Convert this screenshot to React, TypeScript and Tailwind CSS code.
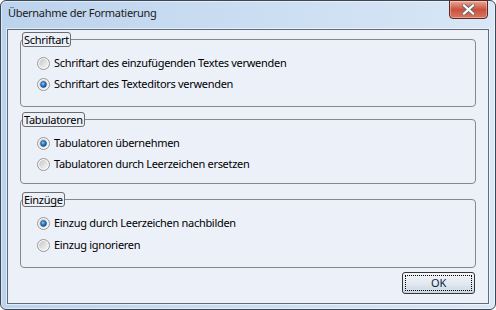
import React from "react";

const groups = [
  {
    title: "Schriftart",
    box: "mt-[2px] h-[75px]",
    gap: "gap-[5px]",
    options: [
      { label: "Schriftart des einzufügenden Textes verwenden", checked: false },
      { label: "Schriftart des Texteditors verwenden", checked: true },
    ],
  },
  {
    title: "Tabulatoren",
    box: "mt-[5px] h-[72px]",
    gap: "gap-[5px]",
    options: [
      { label: "Tabulatoren übernehmen", checked: true },
      { label: "Tabulatoren durch Leerzeichen ersetzen", checked: false },
    ],
  },
  {
    title: "Einzüge",
    box: "mt-[8px] h-[76px]",
    gap: "gap-[6px]",
    options: [
      { label: "Einzug durch Leerzeichen nachbilden", checked: true },
      { label: "Einzug ignorieren", checked: false },
    ],
  },
];

function Radio({ checked }: { checked: boolean }) {
  return (
    <svg width="13" height="13" viewBox="0 0 13 13" className="shrink-0">
      <defs>
        <linearGradient id="rbInner" x1="0" y1="0" x2="1" y2="1">
          <stop offset="0" stopColor="#c6c6c6" />
          <stop offset="1" stopColor="#f7f7f7" />
        </linearGradient>
        <radialGradient id="rbDot" cx="0.4" cy="0.35" r="0.7">
          <stop offset="0" stopColor="#8fd0ff" />
          <stop offset="0.5" stopColor="#2b7fd0" />
          <stop offset="1" stopColor="#0d4d92" />
        </radialGradient>
      </defs>
      <circle cx="6.5" cy="6.5" r="6" fill="#f5f5f5" stroke="#979797" />
      <circle cx="6.5" cy="6.5" r="4.4" fill="url(#rbInner)" />
      {checked && <circle cx="6.5" cy="6.5" r="2.9" fill="url(#rbDot)" stroke="#15467e" strokeWidth="0.7" />}
    </svg>
  );
}

function CloseButton() {
  return (
    <div className="ml-auto mr-[7px] -mt-px flex h-[19px] w-[39px] items-center justify-center rounded-b-[4px] border border-[#5b2620] bg-gradient-to-b from-[#e9a898] via-[#c9513d] to-[#d87560] shadow-[inset_0_0_0_1px_rgba(255,255,255,0.35)]">
      <svg width="13" height="11" viewBox="0 0 13 11">
        <path d="M2 1.5 L11 9.5 M11 1.5 L2 9.5" stroke="#6a6a6a" strokeWidth="4" strokeLinecap="square" />
        <path d="M2 1.5 L11 9.5 M11 1.5 L2 9.5" stroke="#ffffff" strokeWidth="2.2" strokeLinecap="square" />
      </svg>
    </div>
  );
}

export default function App() {
  return (
    <div className="h-[310px] w-[496px] bg-white text-[11px] tracking-[-0.3px] text-black [font-family:'Noto_Sans',sans-serif]">
      <div className="flex h-full flex-col rounded-[6px] border border-[#3b4756] bg-gradient-to-r from-[#bcd3ed] to-[#d9e7f6] shadow-[inset_0_0_0_1px_rgba(255,255,255,0.5)]">
        <div className="flex h-[28px] items-start">
          <span className="pl-[7px] pt-[4px] leading-[16px] text-[#1b1b1b]">Übernahme der Formatierung</span>
          <CloseButton />
        </div>

        <div className="mx-[6px] mb-[5px] flex flex-1 flex-col border border-[#5f6b79] bg-[#ecf0f8] px-[12px] shadow-[0_0_0_1px_rgba(255,255,255,0.55)]">
          {groups.map((g) => (
            <fieldset key={g.title} className={`${g.box} rounded-[4px] border border-[#888888]`}>
              <legend className="ml-[1px] rounded-[3px] border border-[#6c6c6c] px-[1px] leading-[13px]">
                {g.title}
              </legend>
              <div className={`flex flex-col ${g.gap} pl-[16px] pt-[8px]`}>
                {g.options.map((o) => (
                  <div key={o.label} className="flex h-[16px] items-center gap-[4px] leading-[16px]">
                    <Radio checked={o.checked} />
                    <span>{o.label}</span>
                  </div>
                ))}
              </div>
            </fieldset>
          ))}

          <div className="mt-[4px] flex justify-end pr-[1px]">
            <button className="flex h-[22px] w-[73px] items-center justify-center rounded-[3px] border border-[#363636] bg-gradient-to-b from-[#f5f6f8] via-[#e4eaf1] to-[#c9d6e4] p-[2px]">
              <span className="flex h-full w-full items-center justify-center border border-dotted border-black leading-[14px] text-[#0c1d3a]">
                OK
              </span>
            </button>
          </div>
        </div>
      </div>
    </div>
  );
}
